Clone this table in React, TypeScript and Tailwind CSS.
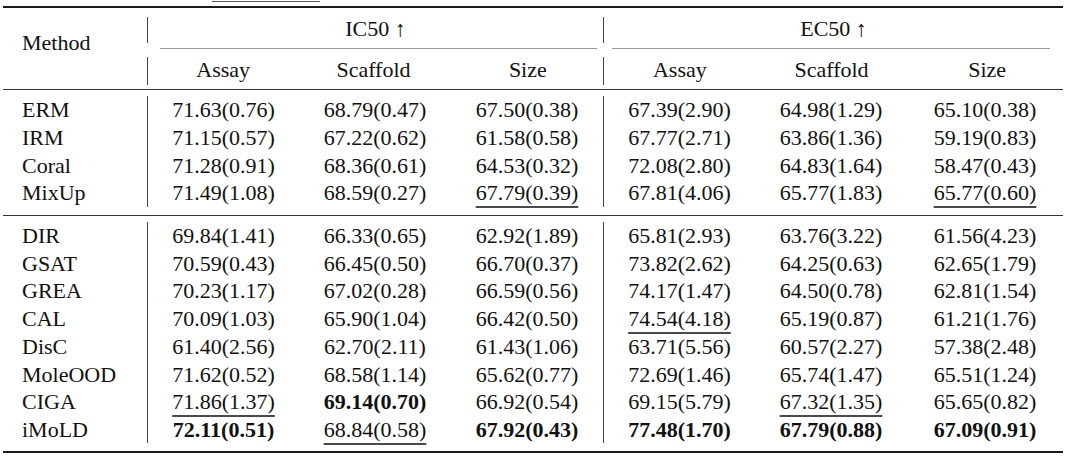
import React from 'react'

type Cell = { v: string; b?: boolean; u?: boolean }

const widths = ['w-[152px]', 'w-[152px]', 'w-[152px]', 'w-[152px]', 'w-[152px]', 'w-[156px]']

const c = (v: string, b = false, u = false): Cell => ({ v, b, u })

const top: [string, Cell[]][] = [
  ['ERM', [c('71.63(0.76)'), c('68.79(0.47)'), c('67.50(0.38)'), c('67.39(2.90)'), c('64.98(1.29)'), c('65.10(0.38)')]],
  ['IRM', [c('71.15(0.57)'), c('67.22(0.62)'), c('61.58(0.58)'), c('67.77(2.71)'), c('63.86(1.36)'), c('59.19(0.83)')]],
  ['Coral', [c('71.28(0.91)'), c('68.36(0.61)'), c('64.53(0.32)'), c('72.08(2.80)'), c('64.83(1.64)'), c('58.47(0.43)')]],
  ['MixUp', [c('71.49(1.08)'), c('68.59(0.27)'), c('67.79(0.39)', false, true), c('67.81(4.06)'), c('65.77(1.83)'), c('65.77(0.60)', false, true)]],
]

const bottom: [string, Cell[]][] = [
  ['DIR', [c('69.84(1.41)'), c('66.33(0.65)'), c('62.92(1.89)'), c('65.81(2.93)'), c('63.76(3.22)'), c('61.56(4.23)')]],
  ['GSAT', [c('70.59(0.43)'), c('66.45(0.50)'), c('66.70(0.37)'), c('73.82(2.62)'), c('64.25(0.63)'), c('62.65(1.79)')]],
  ['GREA', [c('70.23(1.17)'), c('67.02(0.28)'), c('66.59(0.56)'), c('74.17(1.47)'), c('64.50(0.78)'), c('62.81(1.54)')]],
  ['CAL', [c('70.09(1.03)'), c('65.90(1.04)'), c('66.42(0.50)'), c('74.54(4.18)', false, true), c('65.19(0.87)'), c('61.21(1.76)')]],
  ['DisC', [c('61.40(2.56)'), c('62.70(2.11)'), c('61.43(1.06)'), c('63.71(5.56)'), c('60.57(2.27)'), c('57.38(2.48)')]],
  ['MoleOOD', [c('71.62(0.52)'), c('68.58(1.14)'), c('65.62(0.77)'), c('72.69(1.46)'), c('65.74(1.47)'), c('65.51(1.24)')]],
  ['CIGA', [c('71.86(1.37)', false, true), c('69.14(0.70)', true), c('66.92(0.54)'), c('69.15(5.79)'), c('67.32(1.35)', false, true), c('65.65(0.82)')]],
  ['iMoLD', [c('72.11(0.51)', true), c('68.84(0.58)', false, true), c('67.92(0.43)', true), c('77.48(1.70)', true), c('67.79(0.88)', true), c('67.09(0.91)', true)]],
]

const Row = ({ name, cells }: { name: string; cells: Cell[] }) => (
  <div className="flex h-[27.7px] items-center">
    <div className="w-[144px] pl-[19px]">{name}</div>
    {cells.map((cell, i) => (
      <div
        key={i}
        className={`${widths[i]} h-full flex items-center justify-center ${i === 0 || i === 3 ? 'border-l border-[#444]' : ''}`}
      >
        <span
          className={`${cell.b ? 'font-bold' : ''} ${cell.u ? 'underline decoration-[1.5px] decoration-[#4a4a4a] underline-offset-[6px]' : ''}`}
        >
          {cell.v}
        </span>
      </div>
    ))}
  </div>
)

const HeadGroup = ({ title, w, rule }: { title: string; w: string; rule: string }) => (
  <div className={`${w} flex flex-col`}>
    <div className="h-[40px] flex">
      <div className="w-px mt-[9px] h-[26px] bg-[#444]" />
      <div className="flex-1 flex items-center justify-center">{title}</div>
    </div>
    <div className={`h-px bg-[#9a9a9a] ${rule}`} />
    <div className="h-[40px] flex">
      <div className="w-px mt-[8px] h-[28px] bg-[#444]" />
      <div className="flex-1 flex">
        {['Assay', 'Scaffold', 'Size'].map((s, i) => (
          <div key={s} className={`flex-1 flex items-center justify-center ${i === 2 ? 'pl-[4px]' : ''}`}>
            {s}
          </div>
        ))}
      </div>
    </div>
  </div>
)

export default function App() {
  return (
    <div className="w-[1080px] h-[467px] bg-white text-[#111] text-[22px] leading-normal overflow-hidden [font-family:Liberation_Serif,Times_New_Roman,serif]">
      <div className="h-px w-[108px] ml-[212px] mt-px bg-[#555]" />
      <div className="ml-[3px] w-[1060px]">
        <div className="mt-[4px] h-[2px] bg-[#1a1a1a]" />
        <div className="flex">
          <div className="w-[144px] pl-[19px] pb-[12px] flex items-center">Method</div>
          <HeadGroup title="IC50 ↑" w="w-[456px]" rule="ml-[13px] mr-[6px]" />
          <HeadGroup title="EC50 ↑" w="w-[460px]" rule="ml-[9px] mr-[13px]" />
        </div>
        <div className="h-px bg-[#333]" />
        <div className="pt-[6px] pb-[8px]">
          {top.map(([n, cells]) => (
            <Row key={n} name={n} cells={cells} />
          ))}
        </div>
        <div className="h-px bg-[#333]" />
        <div className="pt-[6px] pb-[8px]">
          {bottom.map(([n, cells]) => (
            <Row key={n} name={n} cells={cells} />
          ))}
        </div>
        <div className="h-[2px] bg-[#1a1a1a]" />
      </div>
    </div>
  )
}
